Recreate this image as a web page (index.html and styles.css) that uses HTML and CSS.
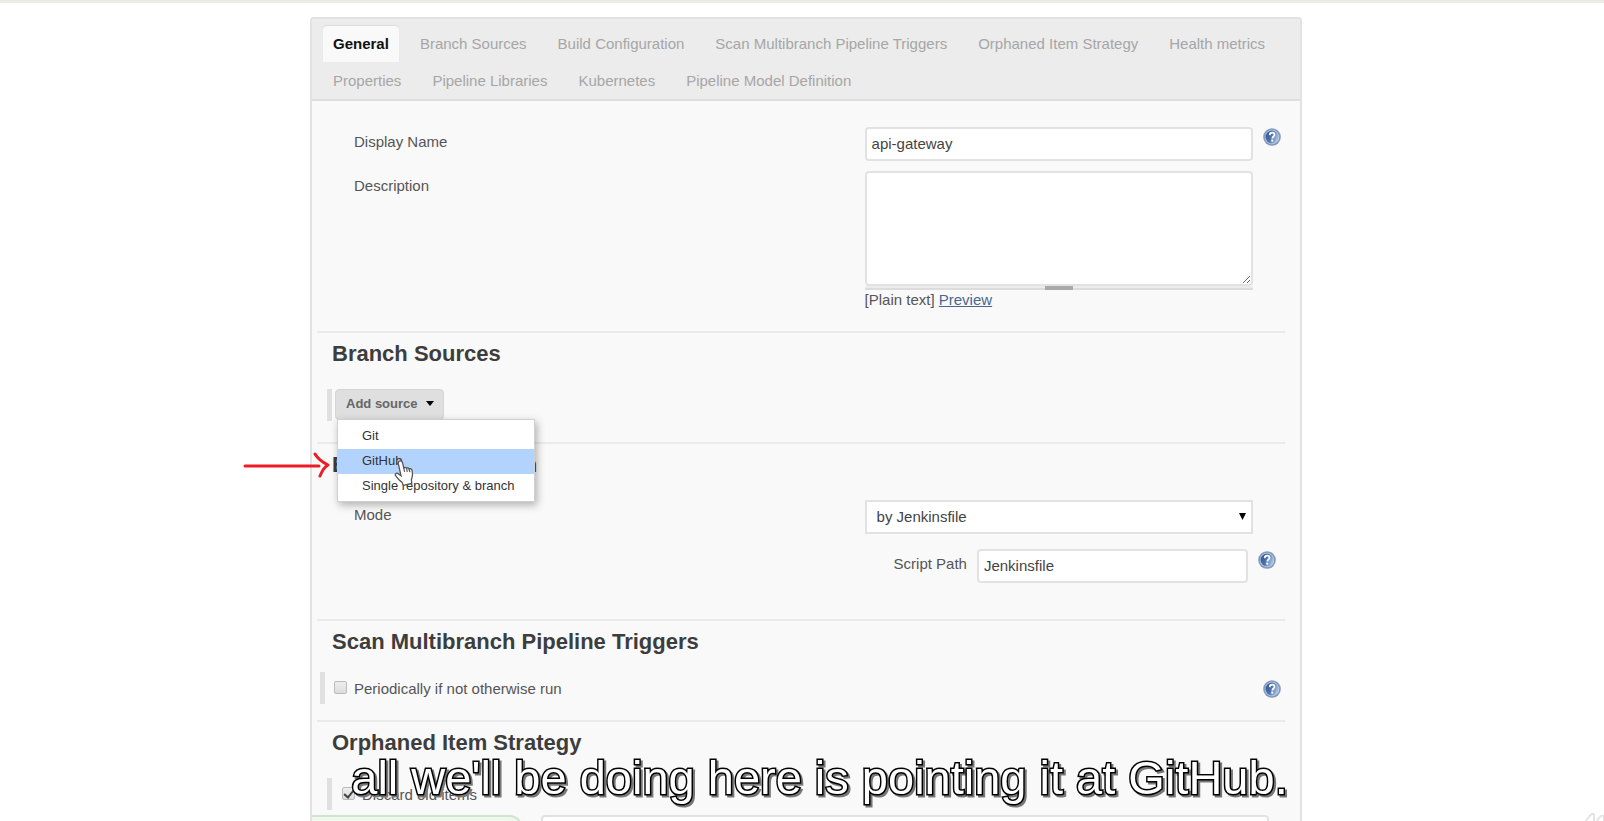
FILE: index.html
```html
<!DOCTYPE html>
<html lang="en">
<head>
<meta charset="utf-8">
<title>api-gateway Config</title>
<link rel="stylesheet" href="styles.css">
</head>
<body>
<svg class="defs" width="0" height="0" aria-hidden="true">
  <defs>
    <linearGradient id="ball" x1="0" y1="0" x2="1" y2="0.4">
      <stop offset="0" stop-color="#2f5596"/>
      <stop offset="0.5" stop-color="#4a6ea9"/>
      <stop offset="1" stop-color="#a3bbdc"/>
    </linearGradient>
    <symbol id="help" viewBox="0 0 18 18">
      <circle cx="9" cy="9" r="8.8" fill="#8199bd"/>
      <circle cx="9" cy="9" r="7.2" fill="#c3d1e6"/>
      <circle cx="9" cy="9" r="6.5" fill="url(#ball)"/>
      <path d="M6.7 7.1C6.8 5.4 7.8 4.7 9.2 4.7c1.400 0 2.300.8 2.300 2 0 1.700-2.200 1.900-2.200 3.700" fill="none" stroke="#fff" stroke-width="1.700"/>
      <circle cx="9.200" cy="12.700" r="1.100" fill="#fff"/>
    </symbol>
  </defs>
</svg>
<main class="page">
  <form class="panel">
    <nav class="tabs" aria-label="Sections">
      <a class="tab active" href="#general">General</a>
      <a class="tab" href="#sources">Branch Sources</a>
      <a class="tab" href="#build">Build Configuration</a>
      <a class="tab" href="#triggers">Scan Multibranch Pipeline Triggers</a>
      <a class="tab" href="#orphaned">Orphaned Item Strategy</a>
      <a class="tab" href="#health">Health metrics</a>
      <a class="tab" href="#properties">Properties</a>
      <a class="tab" href="#libraries">Pipeline Libraries</a>
      <a class="tab" href="#kubernetes">Kubernetes</a>
      <a class="tab" href="#model">Pipeline Model Definition</a>
    </nav>

    <section class="section general" id="general">
      <div class="row">
        <label class="label" for="name">Display Name</label>
        <input class="field" id="name" type="text" value="api-gateway">
        <button class="help" type="button" aria-label="Help for Display Name"><svg><use href="#help"/></svg></button>
      </div>
      <div class="row">
        <label class="label" for="desc">Description</label>
        <div class="editor">
          <textarea class="field area" id="desc"></textarea>
          <div class="handle"><span class="grip"></span></div>
          <div class="format">[Plain text] <a class="preview" href="#preview">Preview</a></div>
        </div>
      </div>
    </section>

    <section class="section" id="sources">
      <h2 class="title">Branch Sources</h2>
      <div class="chunk indented">
        <div class="dropdown">
          <button class="add" type="button">Add source<svg class="caret" viewBox="0 0 8 5"><path d="M0 0h8L4 5z"/></svg></button>
          <div class="menu">
            <button class="item" type="button">Git</button>
            <button class="item hover" type="button">GitHub</button>
            <button class="item" type="button">Single repository &amp; branch</button>
            <svg class="cursor" viewBox="0 0 20 27">
              <path d="M5.500 2.200c1.300-.7 2.600 0 3 1.400L9.800 9c.8-.8 2-.7 2.700.2.900-.7 2.100-.4 2.600.7 1.200-.6 2.600 0 2.900 1.400.7 3.300.9 6.200-.6 9.300l.3 3.900-8.300 1.900-1.500-3.300c-2.600-1.500-4.700-4.300-6.300-6.500-.9-1.500.6-2.900 2.200-2.200l3.200 2.300L4.300 4.700c-.3-1.200.2-2.100 1.200-2.500z" fill="#fff" stroke="#555" stroke-width="1.300"/>
              <path d="M9.800 9l.8 3.800M12.500 9.200l.8 3.600M15.100 9.900l.7 3.200" fill="none" stroke="#555" stroke-width="1.200"/>
            </svg>
          </div>
          <svg class="arrow" viewBox="0 0 88 26">
            <path d="M2 14h74M72 2c3 5 7 8 13 11-4 2-6 6-8 11" fill="none" stroke="#ec1c24" stroke-width="3" stroke-linecap="round" stroke-linejoin="round"/>
          </svg>
        </div>
      </div>
    </section>

    <section class="section build" id="build">
      <h2 class="title">Build Configuration</h2>
      <div class="row">
        <label class="label" for="mode">Mode</label>
        <div class="select">
          <select class="field mode" id="mode"><option>by Jenkinsfile</option></select>
          <svg class="tri" viewBox="0 0 7 7"><path d="M0 0h7L3.500 7z"/></svg>
        </div>
      </div>
      <div class="row">
        <div class="nested">
          <label class="label" for="path">Script Path</label>
          <input class="field" id="path" type="text" value="Jenkinsfile">
        </div>
        <button class="help inner" type="button" aria-label="Help for Script Path"><svg><use href="#help"/></svg></button>
      </div>
    </section>

    <section class="section triggers" id="triggers">
      <h2 class="title">Scan Multibranch Pipeline Triggers</h2>
      <div class="chunk check">
        <input class="tick" id="periodic" type="checkbox">
        <label for="periodic">Periodically if not otherwise run</label>
        <button class="help end" type="button" aria-label="Help for Periodically"><svg><use href="#help"/></svg></button>
      </div>
    </section>

    <section class="section last" id="orphaned">
      <h2 class="title">Orphaned Item Strategy</h2>
      <div class="chunk check indented old">
        <input class="tick" id="discard" type="checkbox" checked>
        <label for="discard">Discard old items</label>
      </div>
    </section>

    <div class="bottom">
      <div class="save"></div>
      <div class="box"></div>
    </div>
  </form>
</main>
<p class="caption">all we'll be doing here is pointing it at GitHub.</p>
<svg class="mark" viewBox="0 0 20 10"><path d="M2 10C6 4 8 2 10 3v7M13 10c2-4 4-6 7-5v5" fill="none" stroke="#e4e4e4" stroke-width="2"/></svg>
</body>
</html>
```
FILE: styles.css
```css
* { box-sizing: border-box; }

html { overflow: hidden; }

body {
  margin: 0;
  height: 100vh;
  overflow: hidden;
  position: relative;
  border-top: 3px solid #ecebe5;
  background: #fff;
  color: #555;
  font: 15px/20px "Liberation Sans", Arial, sans-serif;
}

.defs { position: absolute; }

button, input, select, textarea { font: inherit; color: inherit; margin: 0; }

.page { padding: 14px 302px 0 310px; }

.panel {
  border: 2px solid #e2e2e2;
  border-bottom: 0;
  border-radius: 4px 4px 0 0;
  background: #f9f9f9;
}

.tabs {
  display: flex;
  flex-wrap: wrap;
  gap: 1px 11px;
  padding: 7px 11px 0;
  background: #ececec;
  border-bottom: 2px solid #dfdfdf;
}

.tab {
  padding: 8px 10px;
  border-radius: 4px 4px 0 0;
  color: #a6a6a6;
  text-decoration: none;
}

.tab.active {
  background: #f9f9f9;
  color: #111;
  font-weight: bold;
  box-shadow: 0 -1px 1px #ddd;
}

.section {
  margin: 0 15px 0 5px;
  padding: 8px 0 21px;
  border-bottom: 2px solid #eaeaea;
}

.general { padding-top: 26px; }
.build { padding-bottom: 36px; }
.triggers { padding-bottom: 16px; }
.last { padding-bottom: 5px; border-bottom: 0; }

.title {
  margin: 0 0 22px;
  padding-left: 15px;
  color: #3d3d3d;
  font-size: 22px;
  line-height: 26px;
}

.triggers .title { margin-bottom: 17px; }

.row {
  display: grid;
  grid-template-columns: 510fr 388fr 32px;
  padding-left: 37px;
}

.row + .row { margin-top: 10px; }
.build .row + .row { margin-top: 15px; }

.label { line-height: 30px; }

.field {
  display: block;
  width: 100%;
  height: 34px;
  padding: 0 5px 2px;
  border: 2px solid #e2e2e2;
  border-radius: 4px;
  outline: 0;
  background: #fff;
  color: #444;
}

.area { height: 115px; resize: vertical; }

.handle {
  display: flex;
  justify-content: center;
  height: 4px;
  border-bottom: 2px solid #dcdcdc;
  background: #ececec;
}

.grip { width: 28px; height: 4px; background: #aaa; }

.preview { color: #4a6791; }

.help {
  display: block;
  width: 18px;
  height: 18px;
  margin: 1px 0 0 10px;
  padding: 0;
  border: 0;
  background: none;
}

.help svg { display: block; width: 18px; height: 18px; }
.help.inner { margin: 2px 0 0 5px; }
.help.end { margin: 0 4px 0 auto; }

.chunk {
  display: flex;
  align-items: center;
  min-height: 32px;
  margin-left: 3px;
  padding-left: 9px;
  border-left: 5px solid #e0e0e0;
}

.chunk.check { padding-top: 2px; }
.chunk.indented { margin-left: 10px; padding-left: 3px; }
.chunk.old { padding-left: 10px; }

.dropdown { position: relative; align-self: flex-start; }

.add {
  display: flex;
  align-items: center;
  gap: 8px;
  height: 31px;
  padding: 0 9px 2px 10px;
  border: 1px solid #d5d5d5;
  border-radius: 4px;
  background: #dfdfdf;
  color: #666;
  font-size: 13px;
  font-weight: bold;
}

.caret { width: 8px; height: 5px; fill: #000; }

.menu {
  position: absolute;
  z-index: 1;
  top: 30px;
  left: 2px;
  width: 198px;
  padding: 4px 0 2px;
  border: 1px solid #d0d0d0;
  background: #fff;
  box-shadow: 2px 3px 8px rgba(0, 0, 0, 0.3);
}

.item {
  display: block;
  width: 100%;
  height: 25px;
  padding: 0 0 2px 24px;
  border: 0;
  background: none;
  color: #333;
  font-size: 13px;
  text-align: left;
  white-space: nowrap;
}

.item.hover { background: #b3d3ff; }

.cursor {
  position: absolute;
  top: 39px;
  left: 56px;
  width: 20px;
  height: 27px;
}

.arrow {
  position: absolute;
  top: 63px;
  left: -92px;
  z-index: 2;
  width: 88px;
  height: 26px;
}

.select { position: relative; }

.mode {
  padding: 0 10px;
  border-radius: 0;
  appearance: none;
}

.tri {
  position: absolute;
  top: 13px;
  right: 7px;
  width: 7px;
  height: 7px;
}

.nested {
  grid-column: 2;
  display: flex;
  gap: 10px;
  padding: 0 5px 0 29px;
}

.nested .label { white-space: nowrap; }
.nested .field { flex: 1; min-width: 0; }

.tick {
  flex: none;
  display: grid;
  place-content: center;
  width: 13px;
  height: 13px;
  margin: 0 7px 4px 0;
  border: 1px solid #bbb;
  border-radius: 2px;
  background: linear-gradient(#eee, #dcdcdc);
  appearance: none;
}

.tick:checked::before {
  content: "";
  width: 4px;
  height: 8px;
  border: solid #444;
  border-width: 0 2px 2px 0;
  transform: rotate(40deg);
}

.bottom {
  display: grid;
  grid-template-columns: 210px 1fr;
  gap: 19px;
  padding-right: 31px;
}

.save {
  height: 40px;
  border: 2px solid #cfe3cf;
  border-left: 0;
  border-radius: 0 12px 0 0;
  background: #f0f8ee;
}

.box {
  height: 40px;
  border: 2px solid #e2e2e2;
  border-radius: 4px;
  background: #fff;
}

.caption {
  position: absolute;
  right: 0;
  bottom: 16px;
  left: 35px;
  z-index: 3;
  margin: 0;
  color: #fff;
  font-size: 47px;
  line-height: 54px;
  text-align: center;
  -webkit-text-stroke: 3px #000;
  paint-order: stroke fill;
  filter: drop-shadow(2px 2px 0 #777);
}

.mark {
  position: absolute;
  right: 0;
  bottom: 0;
  width: 20px;
  height: 10px;
}
```
